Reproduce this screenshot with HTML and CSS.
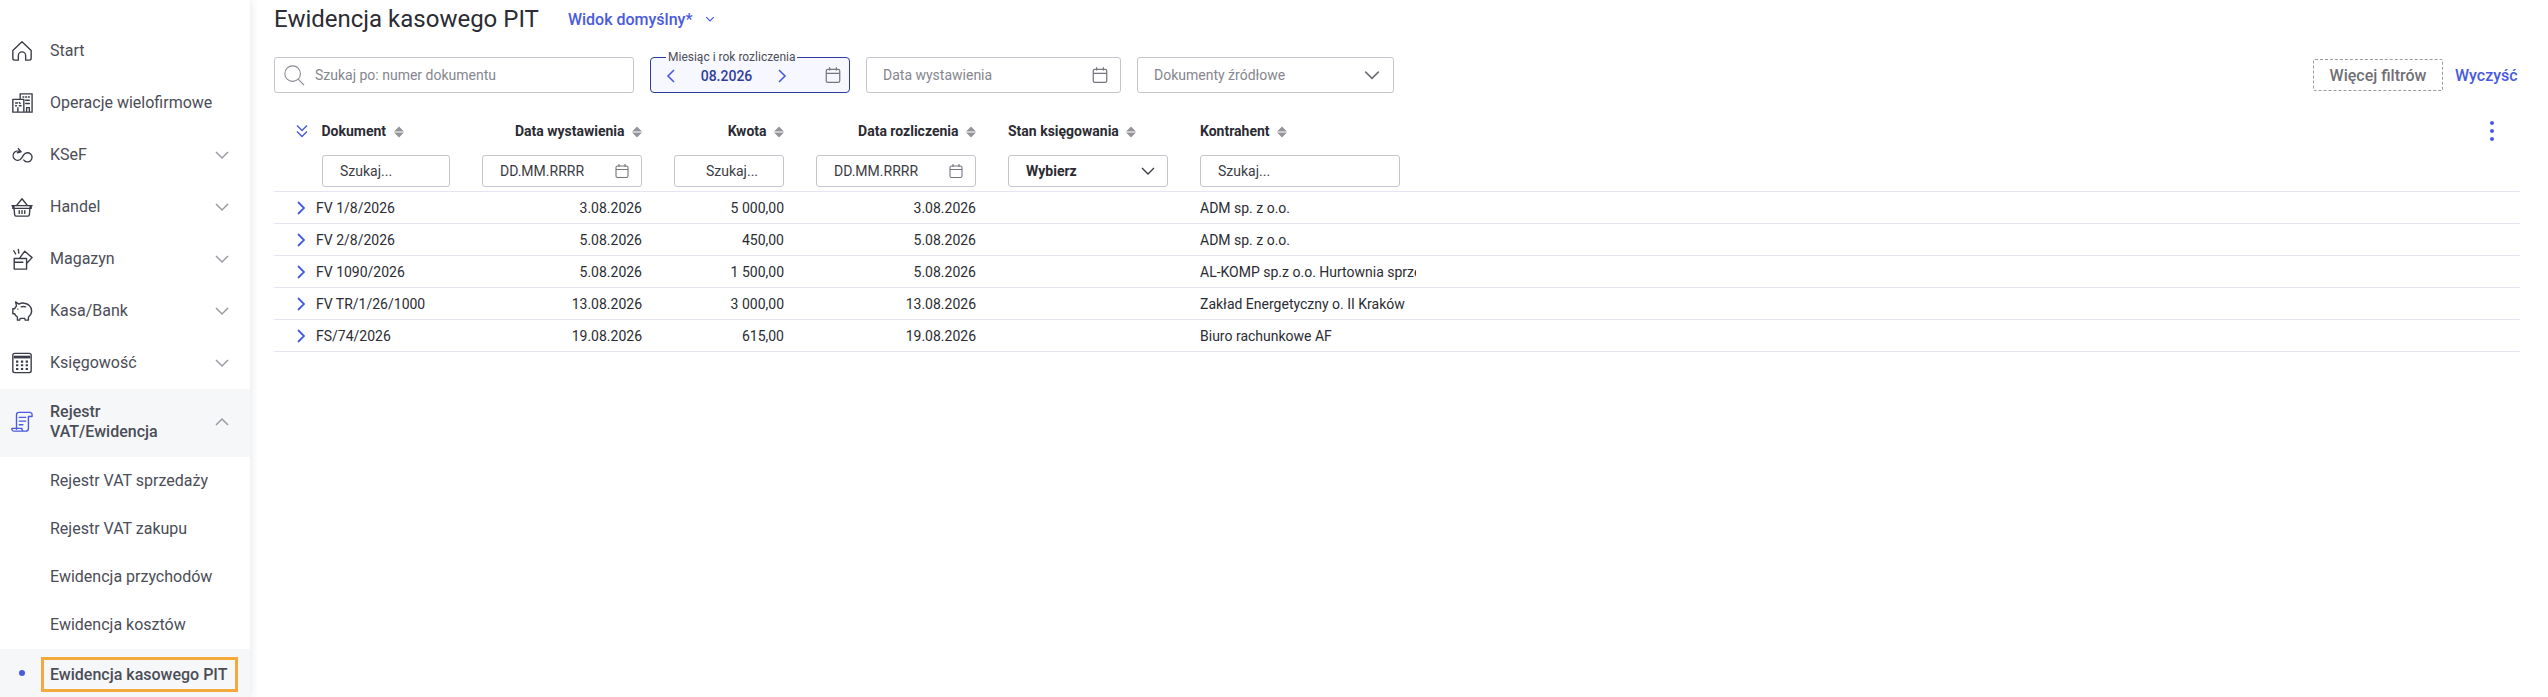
FILE: index.html
```html
<!DOCTYPE html>
<html lang="pl">
<head>
    <meta charset="UTF-8">
    <title>Ewidencja kasowego PIT</title>
    <link rel="stylesheet" href="styles.css">
</head>
<body>
    <svg class="sprites" width="0" height="0">
        <symbol id="chev-down" viewBox="0 0 16 16"><path d="M2 5l6 6 6-6"/></symbol>
        <symbol id="chev-up" viewBox="0 0 16 16"><path d="M2 11l6-6 6 6"/></symbol>
        <symbol id="chev-right" viewBox="0 0 16 16"><path d="M5 2l6 6-6 6"/></symbol>
        <symbol id="chev-left" viewBox="0 0 16 16"><path d="M11 2l-6 6 6 6"/></symbol>
        <symbol id="calendar" viewBox="0 0 16 16"><rect x="2" y="3" width="12" height="11.5" rx="1.5"/><path d="M2 6.500h12M5 1v3M11 1v3"/></symbol>
        <symbol id="sort" viewBox="0 0 10 12"><path class="solid" d="M5 0.500l5 5H0zM5 11.500L0 6.500h10z"/></symbol>
    </svg>

    <div class="app">
        <aside class="sidebar">
            <a class="nav-item">
                <svg class="nav-icon" viewBox="0 0 24 24"><path d="M2 11.500L12 2l10 9.500V20a2 2 0 0 1-2 2h-4v-5a4 4 0 0 0-8 0v5H4a2 2 0 0 1-2-2z"/></svg>
                <span class="nav-label">Start</span>
            </a>
            <a class="nav-item">
                <svg class="nav-icon" viewBox="0 0 24 24"><path d="M10 8V2h13v20H2V8h12v14M13 5.500h1M16 5.500h1M19 5.500h1M16 9h4M16 12.500h4M17 22v-5h3v5M5 12h2M5 15h1M9 15h2M9 11.500l1 1M7.500 22v-5"/></svg>
                <span class="nav-label">Operacje wielofirmowe</span>
            </a>
            <a class="nav-item">
                <svg class="nav-icon" viewBox="0 0 24 24"><path d="M10 8.500a5 5 0 1 0 1.500 7L14 11.500A5 5 0 1 1 14 17.500M8 5l3 3.500-4 1"/></svg>
                <span class="nav-label">KSeF</span>
                <svg class="nav-arrow"><use href="#chev-down"/></svg>
            </a>
            <a class="nav-item">
                <svg class="nav-icon" viewBox="0 0 24 24"><path d="M1 10.500h22M3 10.500l1 10a1.500 1.500 0 0 0 1.500 1.500h13a1.500 1.500 0 0 0 1.500-1.500l1-10M6 10.500L12 3l6 7.500M2 10.500v3h20v-3M9 16v3M12 16v3M15 16v3"/></svg>
                <span class="nav-label">Handel</span>
                <svg class="nav-arrow"><use href="#chev-down"/></svg>
            </a>
            <a class="nav-item">
                <svg class="nav-icon" viewBox="0 0 24 24"><path d="M3.500 11.500H17V23H3.500zM3.500 15.500H13M9 11.500L15 3.500l8 7-6 6.500M3 3l2 3.500M8 1.500l.5 4"/></svg>
                <span class="nav-label">Magazyn</span>
                <svg class="nav-arrow"><use href="#chev-down"/></svg>
            </a>
            <a class="nav-item">
                <svg class="nav-icon" viewBox="0 0 24 24"><path d="M5 2l3.500 2.500c2-1 4-1.500 6-1 4 .5 8 3.500 8 8.500 0 3-1.500 5-3.500 6.500V22h-3.500l-.5-2h-5l-.5 2H7v-3.500c-1.500-1-2.500-2-3-3.500H2V9.500h2c.5-1.500 1.500-2.500 2-3zM11 7.500c1.500-.5 3.500-.5 5 0M7.500 10h.01"/></svg>
                <span class="nav-label">Kasa/Bank</span>
                <svg class="nav-arrow"><use href="#chev-down"/></svg>
            </a>
            <a class="nav-item">
                <svg class="nav-icon" viewBox="0 0 24 24"><rect x="2" y="1.500" width="20" height="21" rx="2"/><path class="thick" d="M3 5.500h18"/><path class="keys" d="M5.500 10.500h2.500M10.800 10.500h2.500M16 10.500h2.500M5.500 14.500h2.500M10.800 14.500h2.500M16 14.500h2.500M5.500 18.500h2.500M10.800 18.500h2.500M16 18.500h2.500"/></svg>
                <span class="nav-label">Księgowość</span>
                <svg class="nav-arrow"><use href="#chev-down"/></svg>
            </a>
            <a class="nav-item is-open">
                <svg class="nav-icon" viewBox="0 0 24 24"><path d="M6 20V4a2.500 2.500 0 0 1 2.500-2.500H21A2.500 2.500 0 0 1 23 4v2h-4M19 6V19a3 3 0 0 1-3 3H3.500A2.500 2.500 0 0 1 1 19h11a2.500 2.500 0 0 0 2.500 3M9 7h7M9 11h7M9 15h4"/></svg>
                <span class="nav-label">Rejestr<br>VAT/Ewidencja</span>
                <svg class="nav-arrow"><use href="#chev-up"/></svg>
            </a>
            <a class="sub-item">Rejestr VAT sprzedaży</a>
            <a class="sub-item">Rejestr VAT zakupu</a>
            <a class="sub-item">Ewidencja przychodów</a>
            <a class="sub-item">Ewidencja kosztów</a>
            <a class="sub-item is-active"><span class="sub-focus">Ewidencja kasowego PIT</span></a>
        </aside>

        <main class="content">
            <header class="page-head">
                <h1 class="page-title">Ewidencja kasowego PIT</h1>
                <button class="view-btn">Widok domyślny*
                    <svg class="view-arrow"><use href="#chev-down"/></svg>
                </button>
            </header>

            <div class="filters">
                <div class="field field-search">
                    <svg class="search-icon" viewBox="0 0 24 24"><circle cx="10.500" cy="10.500" r="8.500"/><path d="M16.500 16.500L23 23"/></svg>
                    <span class="placeholder">Szukaj po: numer dokumentu</span>
                </div>
                <div class="field field-month">
                    <span class="month-label">Miesiąc i rok rozliczenia</span>
                    <svg class="month-arrow"><use href="#chev-left"/></svg>
                    <span class="month-value">08.2026</span>
                    <svg class="month-arrow"><use href="#chev-right"/></svg>
                    <svg class="cal-icon"><use href="#calendar"/></svg>
                </div>
                <div class="field field-date">
                    <span class="placeholder">Data wystawienia</span>
                    <svg class="cal-icon"><use href="#calendar"/></svg>
                </div>
                <div class="field field-date">
                    <span class="placeholder">Dokumenty źródłowe</span>
                    <svg class="select-arrow"><use href="#chev-down"/></svg>
                </div>
                <button class="more-btn">Więcej filtrów</button>
                <button class="clear-btn">Wyczyść</button>
            </div>

            <table class="grid">
                <colgroup>
                    <col class="c-doc"><col class="c-date"><col class="c-amount"><col class="c-date"><col class="c-date"><col class="c-name"><col>
                </colgroup>
                <thead>
                    <tr class="head-row">
                        <th class="doc-head">
                            <svg class="expand-all" viewBox="0 0 16 16"><path d="M3 2.500l5 5 5-5M3 8.500l5 5 5-5"/></svg>
                            Dokument <svg class="sort-icon"><use href="#sort"/></svg>
                        </th>
                        <th class="num">Data wystawienia <svg class="sort-icon"><use href="#sort"/></svg></th>
                        <th class="num">Kwota <svg class="sort-icon"><use href="#sort"/></svg></th>
                        <th class="num">Data rozliczenia <svg class="sort-icon"><use href="#sort"/></svg></th>
                        <th>Stan księgowania <svg class="sort-icon"><use href="#sort"/></svg></th>
                        <th>Kontrahent <svg class="sort-icon"><use href="#sort"/></svg></th>
                        <th class="menu-cell">
                            <svg class="kebab" viewBox="0 0 6 22"><circle cx="3" cy="3" r="2"/><circle cx="3" cy="11" r="2"/><circle cx="3" cy="19" r="2"/></svg>
                        </th>
                    </tr>
                    <tr class="filter-row">
                        <th class="doc-filter"><div class="cell-input">Szukaj...</div></th>
                        <th><div class="cell-input">DD.MM.RRRR<svg class="cal-icon small"><use href="#calendar"/></svg></div></th>
                        <th><div class="cell-input center">Szukaj...</div></th>
                        <th><div class="cell-input">DD.MM.RRRR<svg class="cal-icon small"><use href="#calendar"/></svg></div></th>
                        <th><div class="cell-input bold">Wybierz<svg class="cell-arrow"><use href="#chev-down"/></svg></div></th>
                        <th><div class="cell-input">Szukaj...</div></th>
                        <th></th>
                    </tr>
                </thead>
                <tbody>
                    <tr>
                        <td class="doc-cell"><svg class="row-arrow"><use href="#chev-right"/></svg>FV 1/8/2026</td>
                        <td class="num">3.08.2026</td><td class="num">5 000,00</td><td class="num">3.08.2026</td><td></td>
                        <td class="name">ADM sp. z o.o.</td><td></td>
                    </tr>
                    <tr>
                        <td class="doc-cell"><svg class="row-arrow"><use href="#chev-right"/></svg>FV 2/8/2026</td>
                        <td class="num">5.08.2026</td><td class="num">450,00</td><td class="num">5.08.2026</td><td></td>
                        <td class="name">ADM sp. z o.o.</td><td></td>
                    </tr>
                    <tr>
                        <td class="doc-cell"><svg class="row-arrow"><use href="#chev-right"/></svg>FV 1090/2026</td>
                        <td class="num">5.08.2026</td><td class="num">1 500,00</td><td class="num">5.08.2026</td><td></td>
                        <td class="name">AL-KOMP sp.z o.o. Hurtownia sprzętu</td><td></td>
                    </tr>
                    <tr>
                        <td class="doc-cell"><svg class="row-arrow"><use href="#chev-right"/></svg>FV TR/1/26/1000</td>
                        <td class="num">13.08.2026</td><td class="num">3 000,00</td><td class="num">13.08.2026</td><td></td>
                        <td class="name">Zakład Energetyczny o. II Kraków</td><td></td>
                    </tr>
                    <tr>
                        <td class="doc-cell"><svg class="row-arrow"><use href="#chev-right"/></svg>FS/74/2026</td>
                        <td class="num">19.08.2026</td><td class="num">615,00</td><td class="num">19.08.2026</td><td></td>
                        <td class="name">Biuro rachunkowe AF</td><td></td>
                    </tr>
                </tbody>
            </table>
        </main>
    </div>
</body>
</html>
```

FILE: styles.css
```css
* {
    margin: 0;
    padding: 0;
    box-sizing: border-box;
    font-family: Roboto, sans-serif;
}

html, body {
    height: 100%;
    overflow: hidden;
    background: #fff;
}

svg {
    fill: none;
    stroke: currentColor;
    flex-shrink: 0;
}

.sprites {
    position: absolute;
}

.solid {
    fill: currentColor;
    stroke: none;
}

button {
    background: none;
    border: none;
    cursor: pointer;
}

.app {
    display: flex;
    height: 697px;
}

/* Sidebar */
.sidebar {
    width: 250px;
    flex-shrink: 0;
    padding-top: 25px;
    overflow: hidden;
    background: #fff;
    box-shadow: 2px 0 8px rgba(0, 0, 0, 0.08);
}

.nav-item {
    display: flex;
    align-items: center;
    height: 52px;
    padding: 0 20px 0 11px;
    color: #4b4d57;
    font-size: 16px;
}

.nav-icon {
    width: 22px;
    height: 22px;
    margin-right: 17px;
    stroke: #3a3c47;
    stroke-width: 1.5;
    stroke-linejoin: round;
    stroke-linecap: round;
}

.nav-icon .thick {
    stroke-width: 3;
    stroke-linecap: butt;
}

.nav-icon .keys {
    stroke-width: 2.2;
    stroke-linecap: butt;
}

.nav-label {
    flex: 1;
    line-height: 20px;
}

.nav-arrow {
    width: 16px;
    height: 16px;
    stroke: #9b9ca3;
    stroke-width: 1.5;
}

.nav-item.is-open {
    height: 68px;
    padding-bottom: 2px;
    background: #f6f7f9;
    font-weight: 500;
}

.is-open .nav-icon {
    stroke: #4a5ae0;
}

.sub-item {
    display: flex;
    align-items: center;
    height: 48px;
    padding: 0 0 2px 50px;
    color: #4b4d57;
    font-size: 16px;
}

.sub-item.is-active {
    padding-bottom: 0;
    background: #f6f7f9;
    position: relative;
    font-weight: 500;
}

.sub-item.is-active::before {
    content: "";
    position: absolute;
    left: 19px;
    top: 21px;
    width: 6px;
    height: 6px;
    border-radius: 50%;
    background: #4a5ae0;
}

.sub-focus {
    display: flex;
    align-items: center;
    width: 197px;
    height: 35px;
    margin: 3px 0 0 -9px;
    padding-left: 6px;
    border: 3px solid #f5a83c;
    white-space: nowrap;
}

/* Main area */
.content {
    flex: 1;
    min-width: 0;
    padding: 0 28px 0 24px;
}

.page-head {
    display: flex;
    align-items: center;
    height: 38px;
}

.page-title {
    color: #2b2c33;
    font-size: 24px;
    font-weight: 400;
}

.view-btn {
    display: flex;
    align-items: center;
    gap: 12px;
    margin-left: 29px;
    color: #4a5ae0;
    font-size: 16px;
    font-weight: 500;
}

.view-arrow {
    width: 10px;
    height: 10px;
    stroke-width: 2;
}

.filters {
    display: flex;
    align-items: center;
    gap: 16px;
    margin-top: 19px;
}

.field {
    position: relative;
    display: flex;
    align-items: center;
    height: 36px;
    padding: 0 14px 0 16px;
    border: 1px solid #c4c5ca;
    border-radius: 3px;
    font-size: 14px;
}

.field-search {
    width: 360px;
    padding-left: 8px;
}

.search-icon {
    width: 22px;
    height: 22px;
    margin-right: 10px;
    stroke: #8a8b92;
    stroke-width: 1.2;
}

.placeholder {
    flex: 1;
    color: #85868d;
}

.field-month {
    width: 200px;
    padding: 0 7px 0 12px;
    border-color: #2e3d9c;
    border-radius: 4px;
    background: #f6f7ff;
}

.month-label {
    position: absolute;
    left: 15px;
    top: -7px;
    padding: 0 2px;
    background: linear-gradient(#fff 50%, #f6f7ff 50%);
    color: #4b4d57;
    font-size: 12px;
    line-height: 13px;
    white-space: nowrap;
}

.month-arrow {
    width: 16px;
    height: 16px;
    margin-top: 2px;
    color: #4a5ae0;
    stroke-width: 1.6;
}

.month-value {
    width: 95px;
    margin-top: 2px;
    color: #2e3d9c;
    font-weight: 500;
    text-align: center;
}

.cal-icon {
    width: 18px;
    height: 18px;
    margin-left: auto;
    stroke: #75767d;
    stroke-width: 1.1;
}

.field-date {
    width: 255px;
}

.field-date:nth-child(3) .cal-icon {
    margin-right: -3px;
}

.field-date:nth-child(4) {
    width: 257px;
}

.select-arrow {
    width: 18px;
    height: 18px;
    margin-right: -2px;
    stroke: #6b6c73;
    stroke-width: 1.3;
}

.more-btn {
    height: 32px;
    width: 130px;
    margin-left: auto;
    border: 1px dashed #9a9ba1;
    border-radius: 2px;
    color: #6f7076;
    font-size: 16px;
    font-weight: 500;
}

.clear-btn {
    width: 65px;
    margin-left: -4px;
    color: #4a5ae0;
    font-size: 16px;
    font-weight: 500;
    text-align: left;
    white-space: nowrap;
}

/* Table */
.grid {
    width: 100%;
    margin-top: 24px;
    border-collapse: collapse;
    table-layout: fixed;
    color: #2b2c33;
    font-size: 14px;
}

.c-doc { width: 192px; }
.c-date { width: 192px; }
.c-amount { width: 142px; }
.c-name { width: 232px; }

.grid th {
    padding: 0 16px;
    text-align: left;
    font-weight: 700;
    white-space: nowrap;
}

.grid th.num,
.grid td.num {
    text-align: right;
}

.head-row {
    height: 28px;
}

.doc-head,
.doc-filter {
    padding-left: 48px !important;
}

.expand-all {
    width: 16px;
    height: 16px;
    margin: 0 8px 0 -28px;
    vertical-align: -3px;
    color: #4a5ae0;
    stroke-width: 1.4;
}

.sort-icon {
    width: 10px;
    height: 12px;
    margin-left: 4px;
    vertical-align: -2px;
    color: #94959b;
    stroke: none;
}

.menu-cell {
    text-align: right !important;
    padding-right: 25px !important;
}

.kebab {
    width: 6px;
    height: 22px;
    fill: #4a5ae0;
    stroke: none;
    vertical-align: middle;
}

.filter-row th {
    padding-top: 10px;
    padding-bottom: 4px;
    border-bottom: 1px solid #e4e4f2;
    font-weight: 400;
}

.cell-input {
    display: flex;
    align-items: center;
    justify-content: space-between;
    height: 32px;
    padding: 0 11px 0 17px;
    border: 1px solid #c4c5ca;
    border-radius: 3px;
    color: #3b3c43;
    font-size: 14px;
}

.cell-input.center {
    justify-content: center;
}

.cell-input.bold {
    font-weight: 700;
    color: #2b2c33;
}

.cal-icon.small {
    width: 16px;
    height: 16px;
    margin-left: 0;
}

.cell-arrow {
    width: 16px;
    height: 16px;
    stroke: #3b3c43;
    stroke-width: 1.4;
}

.grid td {
    height: 32px;
    padding: 0 16px;
    border-bottom: 1px solid #e4e4f2;
    white-space: nowrap;
}

.grid td.doc-cell {
    padding-left: 19px;
}

.row-arrow {
    width: 16px;
    height: 16px;
    margin-right: 7px;
    vertical-align: -3px;
    color: #4a5ae0;
    stroke-width: 1.8;
}

.grid td.name {
    overflow: hidden;
    padding-right: 0;
}
```
